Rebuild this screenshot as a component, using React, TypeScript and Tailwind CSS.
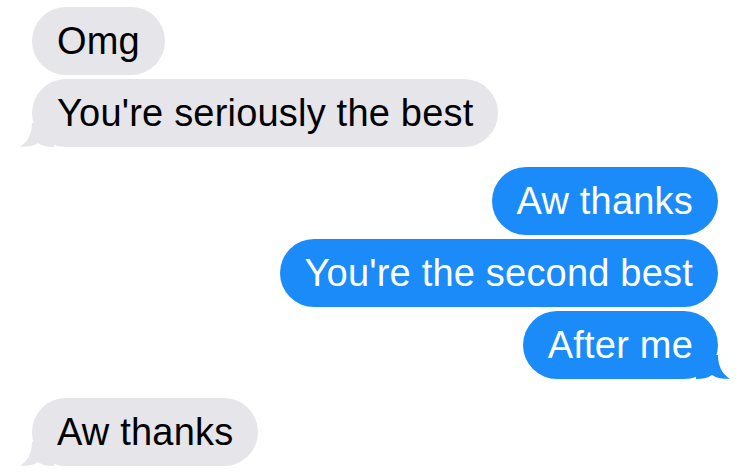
import * as React from 'react';

type Msg = { text: string; tail?: boolean };

const GRAY = 'bg-[#e5e5ea] text-black';
const BLUE = 'bg-[#1b8bfa] text-white';

const LeftTail = () => (
    <svg className="absolute left-[-12px] bottom-0" width="34" height="24" viewBox="0 0 34 24">
        <path d="M12 0 C12 12 7 20 0 23.5 C8 24.5 14 22.5 18 20 C22 23 28 24 34 24 L34 0 Z" fill="#e5e5ea" />
    </svg>
);

const RightTail = () => (
    <svg className="absolute right-[-12px] bottom-0" width="34" height="24" viewBox="0 0 34 24">
        <path d="M22 0 C22 12 27 20 34 23.5 C26 24.5 20 22.5 16 20 C12 23 6 24 0 24 L0 0 Z" fill="#1b8bfa" />
    </svg>
);

const Bubble = ({ msg, mine }: { msg: Msg; mine: boolean }) => (
    <div className={`relative h-[68px] flex items-center px-[25px] rounded-[34px] text-[38px] leading-none tracking-[0.2px] ${mine ? BLUE : GRAY}`}>
        {msg.tail && (mine ? <RightTail /> : <LeftTail />)}
        <span className="relative">{msg.text}</span>
    </div>
);

const Group = ({ msgs, mine, className }: { msgs: Msg[]; mine: boolean; className?: string }) => (
    <div className={`flex flex-col gap-[4px] ${mine ? 'items-end' : 'items-start'} ${className ?? ''}`}>
        {msgs.map((m, i) => (
            <Bubble key={i} msg={m} mine={mine} />
        ))}
    </div>
);

const App = () => {
    return (
        <div className="w-[750px] h-[474px] bg-white overflow-hidden font-['Liberation_Sans',Arial,sans-serif]">
            <div className="flex flex-col px-[32px] pt-[7px]">
                <Group mine={false} msgs={[{ text: 'Omg' }, { text: "You're seriously the best", tail: true }]} />
                <Group
                    mine={true}
                    className="mt-[20px]"
                    msgs={[{ text: 'Aw thanks' }, { text: "You're the second best" }, { text: 'After me', tail: true }]}
                />
                <Group mine={false} className="mt-[19px]" msgs={[{ text: 'Aw thanks', tail: true }]} />
            </div>
        </div>
    );
};

export default App;
